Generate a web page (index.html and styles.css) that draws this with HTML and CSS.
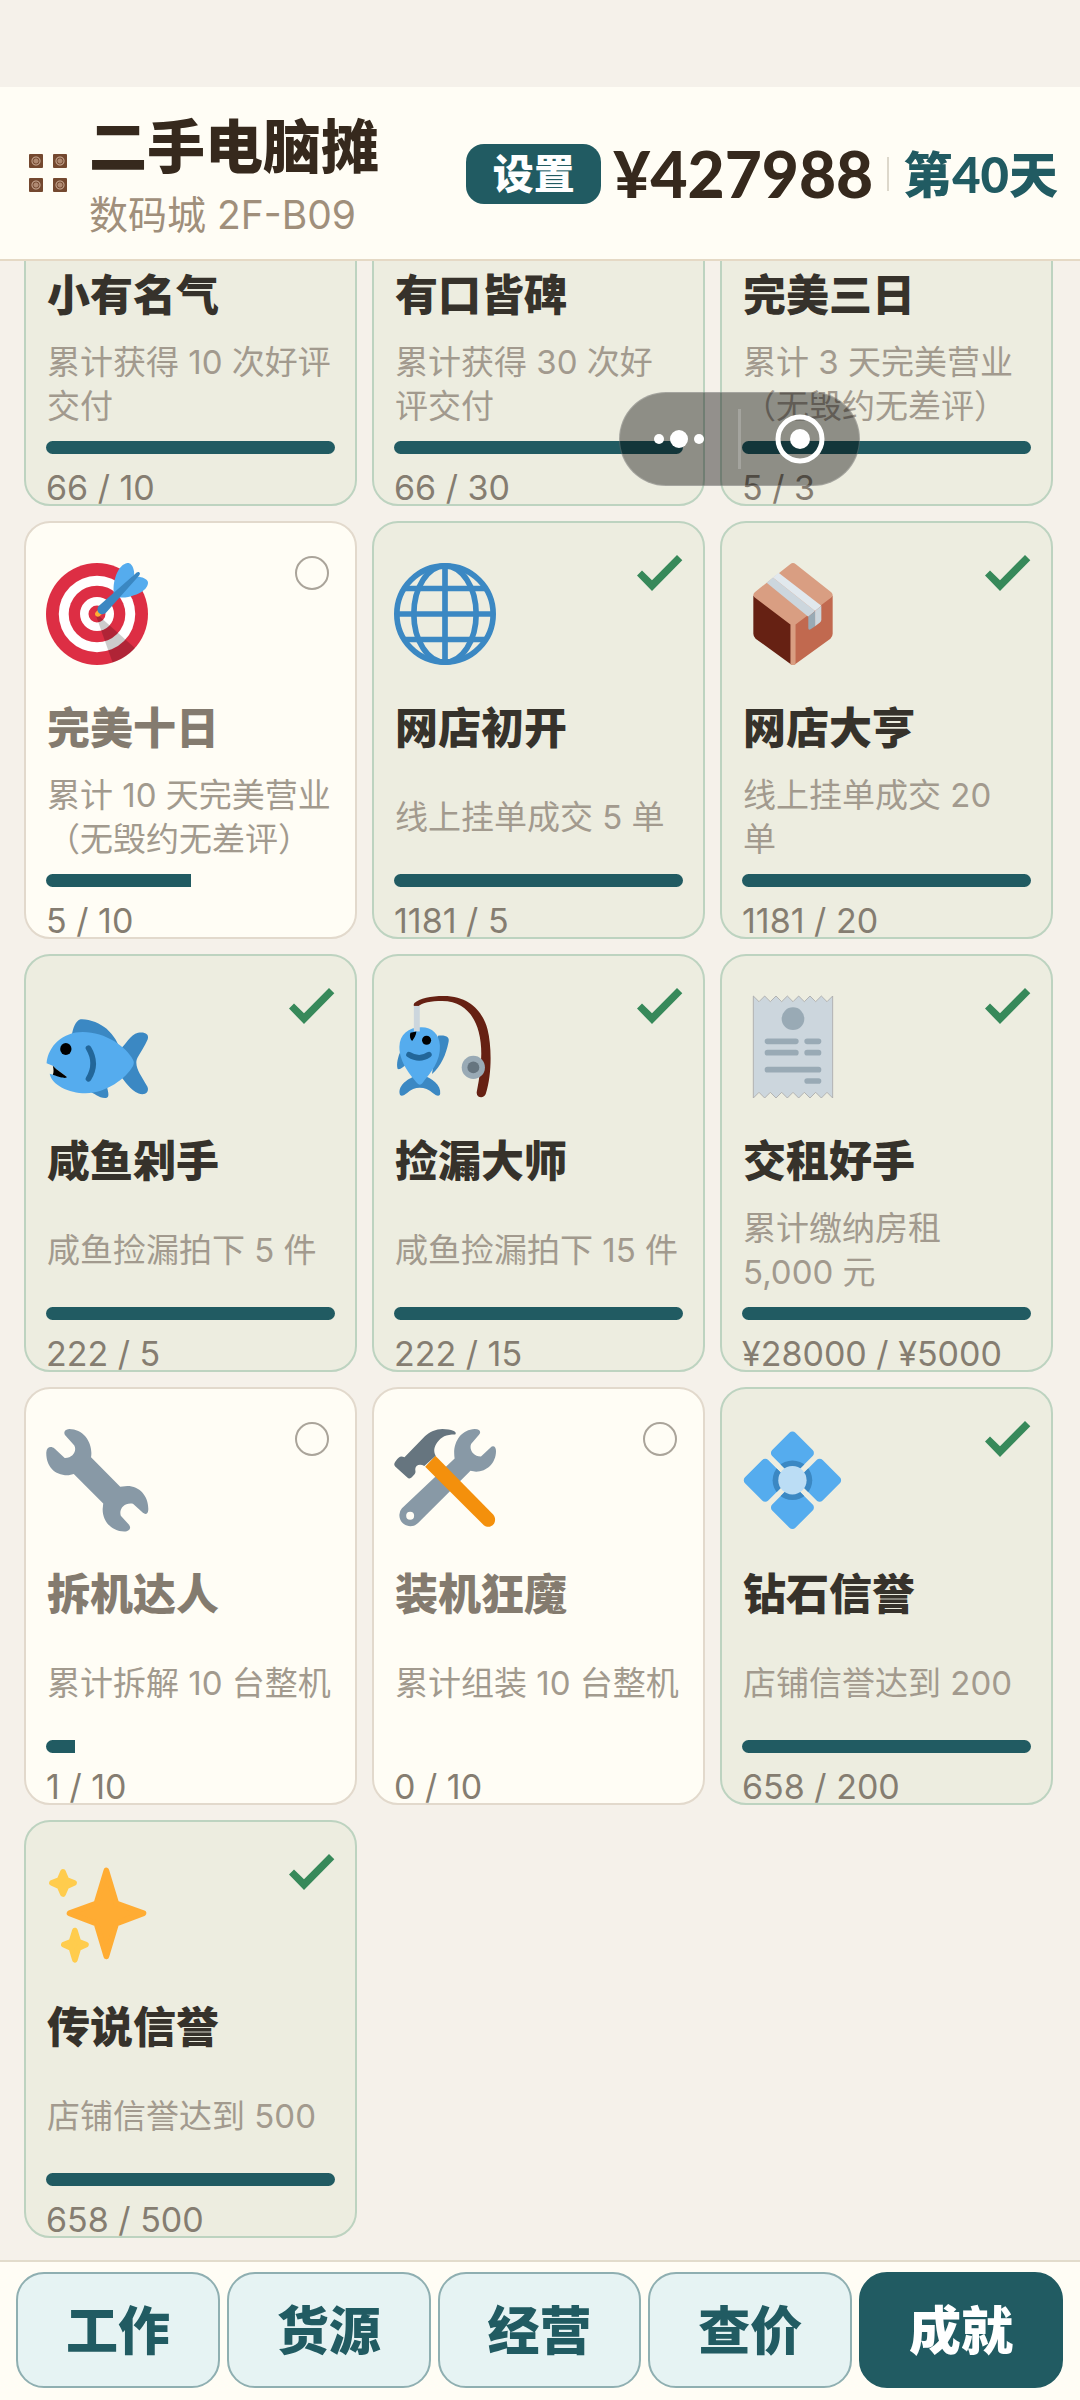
FILE: index.html
```html
<!DOCTYPE html>
<html lang="zh-CN">
<head>
    <meta charset="UTF-8">
    <meta name="viewport" content="width=device-width, initial-scale=1.0">
    <title>二手电脑摊</title>
    <link rel="stylesheet" href="styles.css">
</head>
<body>
    <div class="app">
        <header class="topbar">
            <div class="shop-icon">
                <span></span><span></span><span></span><span></span>
            </div>
            <div class="shop">
                <h1>二手电脑摊</h1>
                <p>数码城 2F-B09</p>
            </div>
            <div class="status">
                <button class="settings" type="button">设置</button>
                <strong class="money">¥427988</strong>
                <span class="day">第40天</span>
            </div>
        </header>

        <main class="content">
            <div class="grid">
                <article class="card done">
                    <div class="icon"></div>
                    <h2>小有名气</h2>
                    <p class="desc">累计获得 10 次好评<br>交付</p>
                    <div class="bar"><div class="fill" style="width: 100%"></div></div>
                    <p class="count">66 / 10</p>
                </article>
                <article class="card done">
                    <div class="icon"></div>
                    <h2>有口皆碑</h2>
                    <p class="desc">累计获得 30 次好<br>评交付</p>
                    <div class="bar"><div class="fill" style="width: 100%"></div></div>
                    <p class="count">66 / 30</p>
                </article>
                <article class="card done">
                    <div class="icon"></div>
                    <h2>完美三日</h2>
                    <p class="desc">累计 3 天完美营业<br>（无毁约无差评）</p>
                    <div class="bar"><div class="fill" style="width: 100%"></div></div>
                    <p class="count">5 / 3</p>
                </article>

                <article class="card">
                    <svg class="mark" viewBox="0 0 46 36"><circle cx="23" cy="18" r="16" /></svg>
                    <svg class="icon" viewBox="0 0 36 36">
                        <circle fill="#DD2E44" cx="18" cy="18" r="18" />
                        <circle fill="#FFF" cx="18" cy="18" r="13.5" />
                        <circle fill="#DD2E44" cx="18" cy="18" r="10" />
                        <circle fill="#FFF" cx="18" cy="18" r="6" />
                        <circle fill="#DD2E44" cx="18" cy="18" r="3" />
                        <path opacity=".2" d="M18.24 18.282l13.144 11.754s-2.647 3.376-7.89 5.109L17.579 18.42l.661-.138z" />
                        <path fill="#FFAC33" d="M18.294 19c-.255 0-.509-.097-.704-.292-.389-.389-.389-1.018 0-1.407l.563-.563c.389-.389 1.018-.389 1.408 0 .388.389.388 1.018 0 1.407l-.564.563c-.194.195-.448.292-.703.292z" />
                        <path fill="#55ACEE" d="M24.016 6.981c-.403 2.079 0 4.691 0 4.691l7.054-7.388c.291-1.454-.528-3.932-1.718-4.238-1.19-.306-4.079.803-5.336 6.935zm5.003 5.003c-2.079.403-4.691 0-4.691 0l7.388-7.054c1.454-.291 3.932.528 4.238 1.718.306 1.19-.803 4.079-6.935 5.336z" />
                        <path fill="#3A87C2" d="M32.798 4.485L21.176 17.587c-.362.362-1.673.882-2.51.046-.836-.836-.419-2.08-.057-2.443L31.815 3.501s.676-.635 1.159-.152-.176 1.136-.176 1.136z" />
                    </svg>
                    <h2>完美十日</h2>
                    <p class="desc">累计 10 天完美营业<br>（无毁约无差评）</p>
                    <div class="bar"><div class="fill" style="width: 50%"></div></div>
                    <p class="count">5 / 10</p>
                </article>
                <article class="card done">
                    <svg class="mark" viewBox="0 0 46 36"><path d="M0 20.6l5-5 10 9.7L40 0l5.3 5.3L15 36z" /></svg>
                    <svg class="icon" viewBox="0 0 36 36">
                        <g fill="none" stroke="#3B88C3" stroke-width="2">
                            <circle cx="18" cy="18" r="17" />
                            <ellipse cx="18" cy="18" rx="11" ry="17" />
                            <path d="M18 1v34M1 18h34M4 9h28M4 27h28" />
                        </g>
                    </svg>
                    <h2>网店初开</h2>
                    <p class="desc">线上挂单成交 5 单</p>
                    <div class="bar"><div class="fill" style="width: 100%"></div></div>
                    <p class="count">1181 / 5</p>
                </article>
                <article class="card done">
                    <svg class="mark" viewBox="0 0 46 36"><path d="M0 20.6l5-5 10 9.7L40 0l5.3 5.3L15 36z" /></svg>
                    <svg class="icon" viewBox="0 0 36 36">
                        <path fill="#662113" d="M4 11.500L18 22v14q-.6 0-1-.4L4.800 26.700Q4 26 4 25z" />
                        <path fill="#C1694F" d="M32 11.500L18 22v14q.6 0 1-.4l12.200-8.900q.8-.7.8-1.700z" />
                        <path fill="#D99E82" d="M17.100 21.600h1.800v14.100q-.9.600-1.800 0zM17 .4q1-.8 2 0l12.500 9.900q1 1 0 1.900L18.800 21.800q-.8.700-1.600 0L4.500 12.200q-1-.9 0-1.900z" />
                        <path fill="#CCD6DD" d="M8.700 7l2.200-1.900 14.900 11.800-2.400 2.100z" />
                        <path fill="#E1E8ED" d="M10.900 5.100l2-1.700L28 15.100l-2.200 1.800z" />
                        <path fill="#99AAB5" d="M23.400 19l2.400-2.100v5.400l-1.600 1.100q-.8.400-.8-.5z" />
                        <path fill="#CCD6DD" d="M25.800 16.900l2.200-1.800v4.900q0 .6-.5 1l-1.700 1.300z" />
                    </svg>
                    <h2>网店大亨</h2>
                    <p class="desc">线上挂单成交 20<br>单</p>
                    <div class="bar"><div class="fill" style="width: 100%"></div></div>
                    <p class="count">1181 / 20</p>
                </article>

                <article class="card done">
                    <svg class="mark" viewBox="0 0 46 36"><path d="M0 20.6l5-5 10 9.7L40 0l5.3 5.3L15 36z" /></svg>
                    <svg class="icon" viewBox="0 0 36 36">
                        <path fill="#3B88C3" d="M9 14.500c.4-3 1.400-5.800 3.200-6.300 3-.2 7 1.400 9.200 3.400 2.600 2.500 4.200 5 4.600 7.400zM26 19c2-1.500 3.700-5.400 6.500-6 2.200-.4 4 .3 3.400 2.300-2.500 5.400-4 6.200-4 8.400s1.800 4.600 3.900 8.300c.8 2-1 3.200-3.100 2.400-3-1.100-4.800-4.400-6.700-6.400zM15 33.500c2 .7 3.700 2.600 6 2.500 1.600 0 1-2 .5-4z" />
                        <path fill="#55ACEE" d="M.2 23.700C.8 17.500 6 12.700 13 12.700c8 0 15.500 5.300 17.700 9.800.4.8.4 1.400 0 2.200C28.300 29 21.300 34.300 14 34.300c-6 0-12-3-12.700-6.900 2.100.6 4.300 1.100 6.100 1.200C6 27.300 3.800 26.300 2.400 24.600z" />
                        <path d="M2.400 24.600c1.400 1.700 3.600 2.700 5 4-.4.500-1.300.5-5-.8.4-.9.300-2 0-3.200z" />
                        <ellipse cx="7" cy="18.700" rx="2" ry="2.100" />
                        <path fill="none" stroke="#269" stroke-width="2" stroke-linecap="round" d="M15 18.400q3.300 5.500 0 10.800" />
                    </svg>
                    <h2>咸鱼剁手</h2>
                    <p class="desc">咸鱼捡漏拍下 5 件</p>
                    <div class="bar"><div class="fill" style="width: 100%"></div></div>
                    <p class="count">222 / 5</p>
                </article>
                <article class="card done">
                    <svg class="mark" viewBox="0 0 46 36"><path d="M0 20.6l5-5 10 9.7L40 0l5.3 5.3L15 36z" /></svg>
                    <svg class="icon" viewBox="0 0 36 36">
                        <path fill="#662113" d="M7.200 2.500C9 .8 13 0 17.500 0 27 0 31.500 6 33 11.700c1.500 6 1.600 16-.6 22.800-.6 1.900-3.500 1.500-3.200-.6 1.600-8.200 2.300-15 .7-21.200C28.500 7 24.500 1.800 17 1.800c-4 0-7 .5-8.600 2-1 .6-1.900-.4-1.200-1.300z" />
                        <circle fill="#99AAB5" cx="28" cy="25.200" r="4.100" />
                        <circle fill="#66757F" cx="28" cy="25.200" r="2.100" />
                        <path fill="#3B88C3" d="M15.500 14c3-.3 4.300.5 3.700 2.500-.8 4-2.600 8.400-5.800 11zM2.300 19.500c-.8 1.700-1.600 4.500-1 6.300 1 .3 2-.9 3.100-1.700zM8.300 28C5 29 1.500 31.500 2 34.500c.3 1.300 1.700.4 2.500-.2 1.500-1.300 3-1.900 4.600-1.900s3.200.6 4.700 1.900c.8.6 2.200 1.500 2.500.2.400-3-3-5.600-6.200-6.500z" />
                        <path fill="#55ACEE" d="M9.700 11C5 11 2 13.500 1.900 18c0 5.500 4 10 6.300 12.800q.9 1 1.800 0C13 27 16.500 23 16.200 17.500 16 13.500 13.500 11 9.700 11z" />
                        <path fill="#CCD6DD" d="M7 3.500h2.100v9H7z" />
                        <path d="M5.800 13l2.100-.5c0 1.200-.9 2.500-1.500 3.400-.7-.6-1-1.800-.6-2.900z" />
                        <circle cx="11.500" cy="15.600" r="1.600" />
                        <path fill="none" stroke="#269" stroke-width="2" stroke-linecap="round" d="M5.300 20.700q3.700 2.300 7 0" />
                    </svg>
                    <h2>捡漏大师</h2>
                    <p class="desc">咸鱼捡漏拍下 15 件</p>
                    <div class="bar"><div class="fill" style="width: 100%"></div></div>
                    <p class="count">222 / 15</p>
                </article>
                <article class="card done">
                    <svg class="mark" viewBox="0 0 46 36"><path d="M0 20.6l5-5 10 9.7L40 0l5.3 5.3L15 36z" /></svg>
                    <svg class="icon" viewBox="0 0 36 36">
                        <path fill="#CCD6DD" stroke="#aaa" stroke-width=".3" d="M4 0l2 2 2-2 2 2 2-2 2 2 2-2 2 2 2-2 2 2 2-2 2 2 2-2 2 2 2-2v36l-2-2-2 2-2-2-2 2-2-2-2 2-2-2-2 2-2-2-2 2-2-2-2 2-2-2-2 2z" />
                        <circle fill="#99AAB5" cx="18" cy="8" r="4" />
                        <path stroke="#99AAB5" stroke-width="2" stroke-linecap="round" d="M9 16h10M23 16h4M9 20h10M23 20h4M9 26h18M23 30h4" />
                    </svg>
                    <h2>交租好手</h2>
                    <p class="desc">累计缴纳房租<br>5,000 元</p>
                    <div class="bar"><div class="fill" style="width: 100%"></div></div>
                    <p class="count">¥28000 / ¥5000</p>
                </article>

                <article class="card">
                    <svg class="mark" viewBox="0 0 46 36"><circle cx="23" cy="18" r="16" /></svg>
                    <svg class="icon" viewBox="0 0 36 36">
                        <path fill="#8899A6" d="M8.200 0C6.400.1 6 1.500 7 2.500l3 3.300c1 2-.6 4.500-3.400 4.400L3 6.900C1.800 5.900.2 6.300.1 8.300 0 13 3 16.500 8 16.300l1.800-.4L20.200 26.300l-.2 1.900c-.1 4.300 3 7.800 7.600 8 1.900 0 2.600-1.300 1.700-2.400l-2.900-3.200c-.8-2.500 1.500-4.800 4.300-4.200l3.500 3.200c1 .8 1.800.3 1.900-1 .2-4.800-3-8.500-7.400-8.500l-2.500.3L15.900 10c.8-5-2.500-10-7.700-10z" />
                    </svg>
                    <h2>拆机达人</h2>
                    <p class="desc">累计拆解 10 台整机</p>
                    <div class="bar"><div class="fill" style="width: 10%"></div></div>
                    <p class="count">1 / 10</p>
                </article>
                <article class="card">
                    <svg class="mark" viewBox="0 0 46 36"><circle cx="23" cy="18" r="16" /></svg>
                    <svg class="icon" viewBox="0 0 36 36">
                        <path fill="#8899A6" fill-rule="evenodd" d="M28.500 0c2 .1 2.300 1.100 1.500 2l-2.800 3.300c-.8 2.200 1 4.500 3.500 4.400L34 6.600c1-1 2-.4 2 1.200 0 4.300-3.300 7.300-7 7.300l-2-.4L8.500 33.200C6 35.600 1.800 33.800 1.900 30.300q0-1.300.9-2.300L21.400 10.400C20.500 5 23.500.2 28.500 0zM5.700 29.200a1.400 1.400 0 1 0 0 2.800 1.400 1.400 0 0 0 0-2.800z" />
                        <path fill="#F4900C" d="M11 13.300l3.600-3.900L35 30.200c2 2.500-.8 5.600-3.300 3.800z" />
                        <path fill="#66757F" d="M21.600 1.900c1-.9-1.400-1.900-4.500-1.900-2.300 0-4.500 1-6.200 2.600L3.700 10c-1.400-.8-2.100 0-3 1.200-.8 1-.8 1.500 0 2.300L4.600 17c.7.7 1.300.5 2-.3 1.400-1.300.9-1.700.9-2.600.2-1.600 1.900-1.800 3.200-1l4-3.700c-.8-1.500-.6-3 .6-4.700 1.400-2 3-2.800 6.300-2.800z" />
                    </svg>
                    <h2>装机狂魔</h2>
                    <p class="desc">累计组装 10 台整机</p>
                    <div class="bar"><div class="fill" style="width: 0%"></div></div>
                    <p class="count">0 / 10</p>
                </article>
                <article class="card done">
                    <svg class="mark" viewBox="0 0 46 36"><path d="M0 20.6l5-5 10 9.7L40 0l5.3 5.3L15 36z" /></svg>
                    <svg class="icon" viewBox=".5 .2 36 36">
                        <defs>
                            <clipPath id="petals">
                                <rect x="12.500" y="2.900" width="11.600" height="11.600" rx="1.500" transform="rotate(45 18.300 8.700)" />
                                <rect x="12.500" y="22.100" width="11.600" height="11.600" rx="1.500" transform="rotate(45 18.300 27.900)" />
                                <rect x="2.900" y="12.500" width="11.600" height="11.600" rx="1.500" transform="rotate(45 8.700 18.300)" />
                                <rect x="22.100" y="12.500" width="11.600" height="11.600" rx="1.500" transform="rotate(45 27.900 18.300)" />
                            </clipPath>
                        </defs>
                        <g clip-path="url(#petals)">
                            <path fill="#55ACEE" d="M0 0h37v37H0z" />
                            <circle fill="#3B88C3" cx="18.300" cy="18.300" r="7" />
                        </g>
                        <circle fill="#BBDDF5" cx="18.300" cy="18.300" r="5" />
                    </svg>
                    <h2>钻石信誉</h2>
                    <p class="desc">店铺信誉达到 200</p>
                    <div class="bar"><div class="fill" style="width: 100%"></div></div>
                    <p class="count">658 / 200</p>
                </article>

                <article class="card done">
                    <svg class="mark" viewBox="0 0 46 36"><path d="M0 20.6l5-5 10 9.7L40 0l5.3 5.3L15 36z" /></svg>
                    <svg class="icon" viewBox="0 0 36 36">
                        <g stroke-linejoin="round" stroke-width="2">
                            <path fill="#FFAC33" stroke="#FFAC33" d="M21.300 3l3.500 11.600 9.600 3.500-9.600 3.600-3.500 11.600-3.500-11.600-9.500-3.600 9.500-3.500z" />
                            <path fill="#FFCC4D" stroke="#FFCC4D" d="M6 3.500l1.200 2.800 2.700 1.100-2.700 1.200L6 11.300 4.800 8.600 2.100 7.400l2.700-1.100zM10.200 24.200l1.200 3.900 2.700 1.100-2.700 1.200-1.200 4.100L9 30.400l-2.700-1.200L9 28.100z" />
                        </g>
                    </svg>
                    <h2>传说信誉</h2>
                    <p class="desc">店铺信誉达到 500</p>
                    <div class="bar"><div class="fill" style="width: 100%"></div></div>
                    <p class="count">658 / 500</p>
                </article>
            </div>
        </main>

        <nav class="tabs">
            <button type="button">工作</button>
            <button type="button">货源</button>
            <button type="button">经营</button>
            <button type="button">查价</button>
            <button type="button" class="active">成就</button>
        </nav>

        <!-- floating mini program menu -->
        <div class="capsule">
            <button type="button" aria-label="更多">
                <svg width="52" height="20" viewBox="0 0 52 20"><circle cx="6" cy="10" r="5" /><circle cx="26" cy="10" r="9" /><circle cx="46" cy="10" r="5" /></svg>
            </button>
            <button type="button" aria-label="关闭">
                <svg width="50" height="50" viewBox="0 0 50 50"><circle class="ring" cx="25" cy="25" r="22" /><circle cx="25" cy="25" r="10" /></svg>
            </button>
        </div>
    </div>
</body>
</html>
```
FILE: styles.css
```css
* {
    box-sizing: border-box;
}
body {
    margin: 0;
    background: #f5f1ea;
    font-family: Inter, "Noto Sans CJK SC", sans-serif;
    color: #36291d;
}
h1, h2, p {
    margin: 0;
}
button {
    font-family: inherit;
    cursor: pointer;
    padding: 0;
}
.app {
    position: relative;
    display: flex;
    flex-direction: column;
    height: 100vh;
    padding-top: 87px;
    overflow: hidden;
}

/* header */
.topbar {
    display: flex;
    align-items: center;
    flex-shrink: 0;
    height: 174px;
    padding: 0 22px 0 26px;
    background: #fffdf5;
    border-bottom: 2px solid #e5d9c5;
}
.shop-icon {
    display: grid;
    grid-template-columns: 20px 20px;
    gap: 4px;
}
.shop-icon span {
    height: 20px;
    padding: 3px;
    border-radius: 4px;
    background: radial-gradient(circle, #b08a72 0 2px, #74482f 3px, #c9aa94 4px, #74482f 5px) content-box #f5ede3;
}
.shop {
    margin-left: 19px;
    padding-top: 8px;
}
.shop h1 {
    font-size: 58px;
    font-weight: 900;
    line-height: 76px;
}
.shop p {
    font-size: 39px;
    line-height: 60px;
    color: #a08f7b;
}
.status {
    display: flex;
    align-items: center;
    margin-left: auto;
    padding-top: 2px;
    font-family: Lato, "Noto Sans CJK SC", sans-serif;
    white-space: nowrap;
}
.settings {
    width: 135px;
    height: 60px;
    border: none;
    border-radius: 18px;
    background: #215b62;
    color: #fff;
    font-size: 41px;
    font-weight: 900;
    line-height: 60px;
}
.money {
    margin-left: 12px;
    font-size: 64px;
    font-weight: 900;
    line-height: 76px;
}
.day {
    display: flex;
    align-items: center;
    margin-left: 14px;
    font-size: 49px;
    font-weight: 900;
    line-height: 60px;
    color: #215b62;
}
.day::before {
    content: "";
    width: 2px;
    height: 34px;
    margin-right: 14px;
    background: #ddd8cb;
}

/* achievements */
.content {
    flex: 1;
    min-height: 0;
    display: flex;
    flex-direction: column;
    justify-content: flex-end;
    padding: 0 27px 22px 24px;
    overflow: hidden;
}
.grid {
    display: grid;
    grid-template-columns: repeat(3, 1fr);
    grid-auto-rows: 418px;
    gap: 15px;
}
.card {
    position: relative;
    padding: 40px 20px 0;
    border: 2px solid #e2d9cc;
    border-radius: 26px;
    background: #fffdf5;
}
.card.done {
    border-color: #bdd3c0;
    background: #edede0;
}
.icon {
    display: block;
    width: 102px;
    height: 102px;
    overflow: visible;
}
.mark {
    position: absolute;
    top: 32px;
    right: 20px;
    width: 46px;
    height: 36px;
    fill: none;
    stroke: #aaa49a;
    stroke-width: 2;
}
.done .mark {
    fill: #37895a;
    stroke: none;
}
.card h2 {
    margin-top: 33px;
    padding-left: 1px;
    font-size: 43px;
    font-weight: 900;
    line-height: 60px;
    color: #847b6f;
}
.card.done h2 {
    color: #36322b;
}
.desc {
    display: grid;
    align-content: center;
    height: 88px;
    margin-top: 15px;
    padding-left: 1px;
    font-size: 33px;
    line-height: 44px;
    white-space: nowrap;
    color: #a29a8e;
}
.bar {
    height: 13px;
    margin-top: 13px;
    border-radius: 7px;
    overflow: hidden;
}
.fill {
    height: 100%;
    background: #215b62;
}
.count {
    margin-top: 16px;
    font-size: 34px;
    line-height: 36px;
    color: #857d71;
}

/* bottom tabs */
.tabs {
    display: flex;
    flex-shrink: 0;
    gap: 7px;
    padding: 10px 17px 12px 16px;
    background: #fffdf5;
    border-top: 2px solid #e2dccc;
}
.tabs button {
    flex: 1;
    height: 116px;
    padding-bottom: 5px;
    border: 2px solid #8fafb1;
    border-radius: 28px;
    background: #e6f3f3;
    color: #215b62;
    font-size: 52px;
    font-weight: 900;
}
.tabs .active {
    border-color: #215b62;
    background: #215b62;
    color: #fff;
}

.capsule {
    position: absolute;
    top: 392px;
    right: 220px;
    display: flex;
    align-items: center;
    width: 241px;
    height: 94px;
    border: 1px solid rgba(255, 255, 255, 0.2);
    border-radius: 47px;
    background: rgba(0, 0, 0, 0.4);
}
.capsule button {
    display: flex;
    align-items: center;
    justify-content: center;
    flex: 1;
    height: 60px;
    border: none;
    background: none;
}
.capsule button + button {
    border-left: 3px solid rgba(255, 255, 255, 0.2);
}
.capsule svg {
    fill: #fff;
}
.capsule .ring {
    fill: none;
    stroke: #fff;
    stroke-width: 5;
}
```
